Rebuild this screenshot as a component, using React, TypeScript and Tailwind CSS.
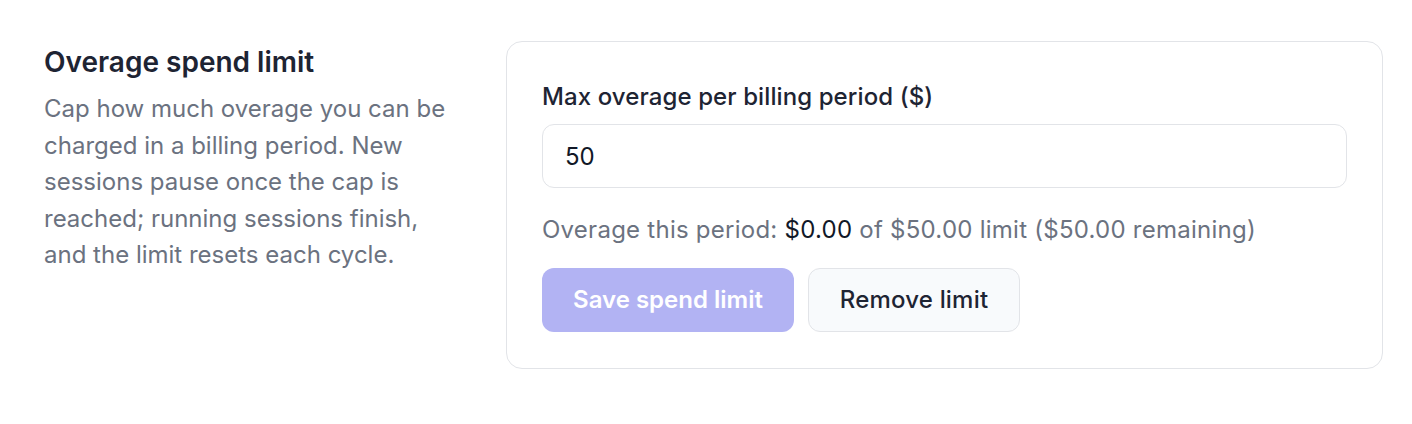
import { useState } from 'react';

const App = () => {
  const [limit, setLimit] = useState('50');

  return (
    <div className="min-h-[424px] bg-white font-['Inter','Liberation_Sans',sans-serif] antialiased">
      <div className="flex pl-[44px] pr-[29px] pt-[41px] pb-[55px]">
        {/* Section description */}
        <div className="w-[414px] shrink-0 mr-[48px] pt-[4px]">
          <h2 className="text-[28px] leading-[34px] font-semibold text-[#1e2433]">
            Overage spend limit
          </h2>
          <p className="mt-[12px] text-[24px] leading-[36.5px] text-[#6b7280]">
            Cap how much overage you can be charged in a billing period. New sessions pause once the cap is
            reached; running sessions finish, and the limit resets each cycle.
          </p>
        </div>

        {/* Card */}
        <div className="flex-1 rounded-[16px] border border-[#e2e4e8] bg-white px-[35px] pt-[39px] pb-[36px]">
          <label className="block text-[24px] leading-[32px] font-medium text-[#1e2433] tracking-[0.1px]">
            Max overage per billing period ($)
          </label>
          <input
            value={limit}
            onChange={(e) => setLimit(e.target.value)}
            className="mt-[11px] block w-full h-[64px] rounded-[12px] border border-[#e2e4e8] px-[22px] text-[24px] text-[#111827] outline-none"
          />
          <p className="mt-[26px] text-[24px] leading-[32px] text-[#6b7280] tracking-[0.25px]">
            Overage this period: <span className="text-[#111827]">$0.00</span> of $50.00 limit ($50.00 remaining)
          </p>
          <div className="mt-[22px] flex gap-[14px]">
            <button
              disabled
              className="h-[64px] w-[252px] rounded-[12px] bg-[#b2b3f3] text-[24px] font-semibold text-white"
            >
              Save spend limit
            </button>
            <button className="h-[64px] w-[212px] rounded-[12px] border border-[#e2e4e8] bg-[#f8fafc] text-[24px] font-medium text-[#1e2433] tracking-[0.2px]">
              Remove limit
            </button>
          </div>
        </div>
      </div>
    </div>
  );
};

export default App;
